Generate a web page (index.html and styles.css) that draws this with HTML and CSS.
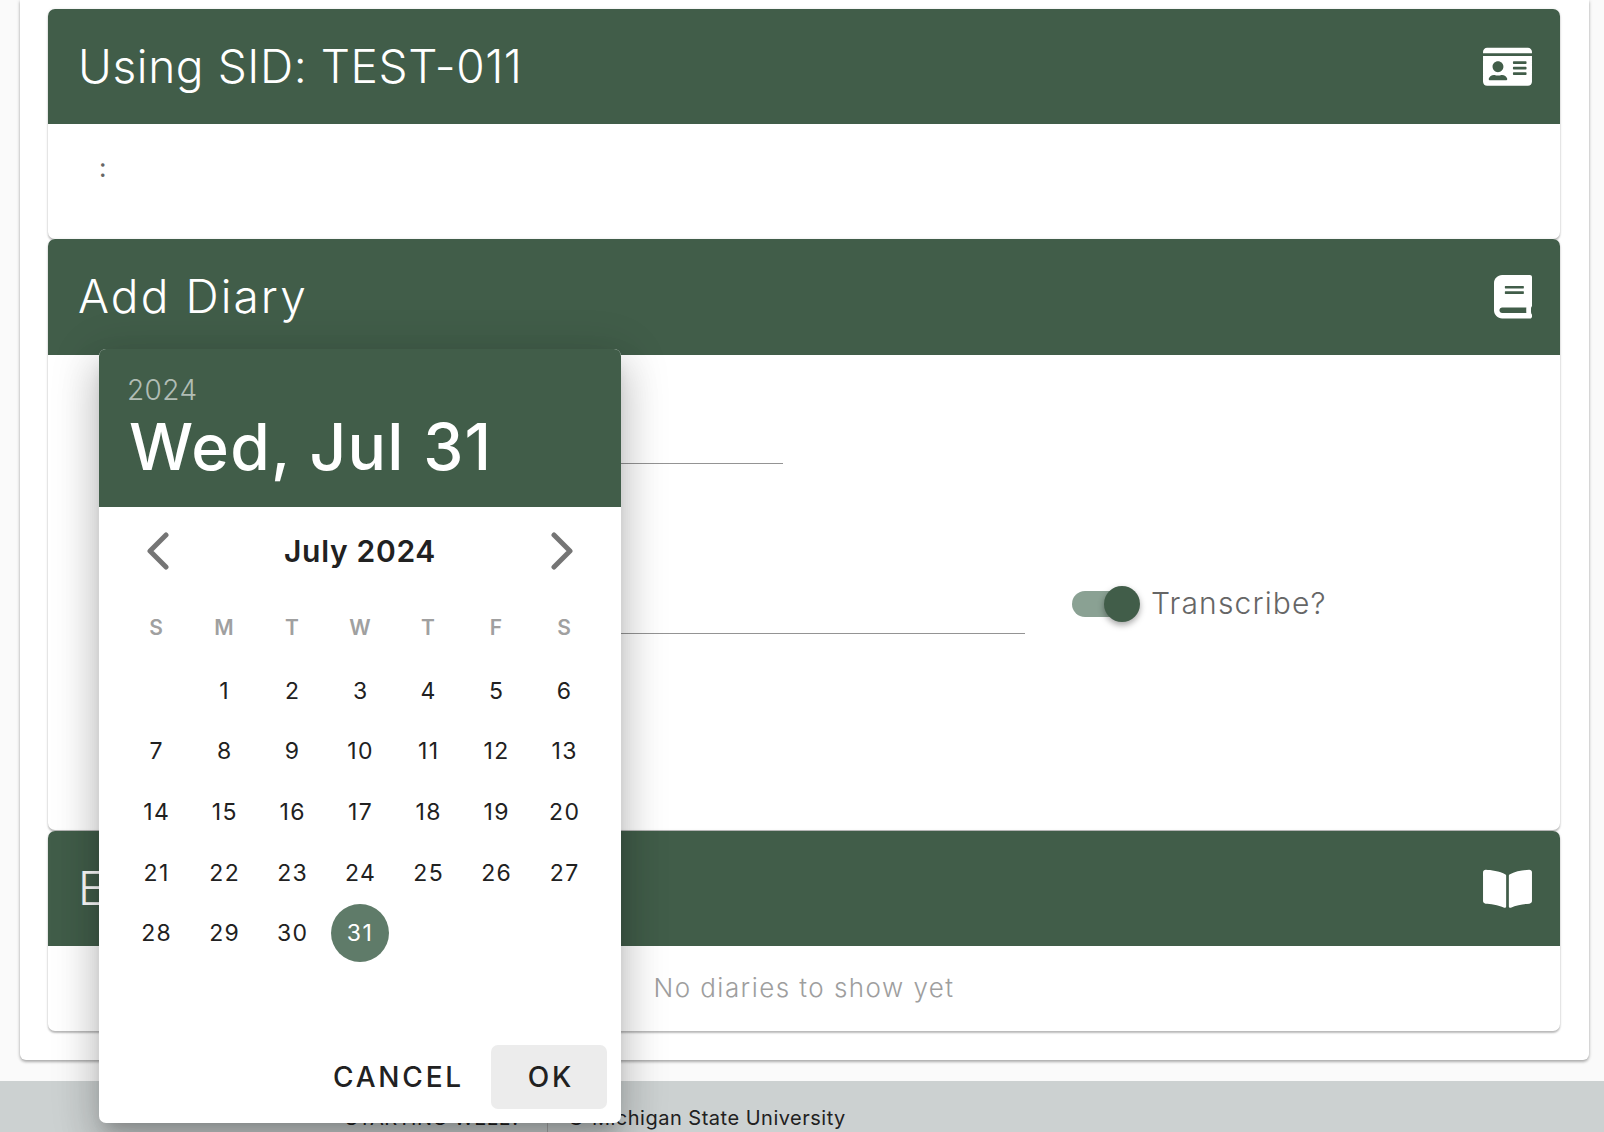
FILE: index.html
```html
<!DOCTYPE html>
<html>
<head>
    <title>Diary</title>
    <link rel="stylesheet" href="styles.css">
</head>
<body>
    <div class="sheet">
        <!-- subject card -->
        <section class="card card-sid">
            <header class="card-head">
                <h2>Using SID: TEST-011</h2>
                <svg class="icon-wide" viewBox="0 0 576 512"><path d="M528 32H48C21.5 32 0 53.5 0 80v16h576V80c0-26.5-21.5-48-48-48zM0 432c0 26.5 21.5 48 48 48h480c26.5 0 48-21.5 48-48V128H0v304zm352-232c0-4.4 3.6-8 8-8h144c4.4 0 8 3.6 8 8v16c0 4.4-3.6 8-8 8H360c-4.4 0-8-3.6-8-8v-16zm0 64c0-4.4 3.6-8 8-8h144c4.4 0 8 3.6 8 8v16c0 4.4-3.6 8-8 8H360c-4.4 0-8-3.6-8-8v-16zm0 64c0-4.4 3.6-8 8-8h144c4.4 0 8 3.6 8 8v16c0 4.4-3.6 8-8 8H360c-4.4 0-8-3.6-8-8v-16zM176 192c35.3 0 64 28.7 64 64s-28.7 64-64 64-64-28.7-64-64 28.7-64 64-64zM67.1 396.2C75.5 370.5 99.6 352 128 352h8.2c12.3 5.1 25.7 8 39.8 8s27.6-2.9 39.8-8h8.2c28.4 0 52.5 18.5 60.9 44.2 3.2 9.9-5.2 19.8-15.6 19.8H82.7c-10.4 0-18.8-10-15.6-19.8z"/></svg>
            </header>
            <div class="card-body sid-body">:</div>
        </section>

        <!-- add diary form -->
        <section class="card card-add">
            <header class="card-head head-add">
                <h2>Add Diary</h2>
                <svg class="icon-narrow" viewBox="0 0 448 512"><path d="M448 360V24c0-13.3-10.7-24-24-24H96C43 0 0 43 0 96v320c0 53 43 96 96 96h328c13.3 0 24-10.7 24-24v-16c0-7.5-3.5-14.3-8.9-18.7-4.2-15.4-4.2-59.3 0-74.7 5.4-4.3 8.9-11.1 8.9-18.6zM128 134c0-3.3 2.7-6 6-6h212c3.3 0 6 2.7 6 6v20c0 3.3-2.7 6-6 6H134c-3.3 0-6-2.7-6-6v-20zm0 64c0-3.3 2.7-6 6-6h212c3.3 0 6 2.7 6 6v20c0 3.3-2.7 6-6 6H134c-3.3 0-6-2.7-6-6v-20zm253.4 250H96c-17.7 0-32-14.3-32-32 0-17.6 14.4-32 32-32h285.4c-1.9 17.1-1.9 46.9 0 64z"/></svg>
            </header>
            <div class="card-body add-body">
                <div class="field field-date"></div>
                <div class="add-row">
                    <div class="field field-note"></div>
                    <div class="switch">
                        <span class="switch-track"><span class="switch-thumb"></span></span>
                        <span class="switch-label">Transcribe?</span>
                    </div>
                </div>
            </div>
        </section>

        <!-- diary list, the dialog covers all of the title but its first letter -->
        <section class="card card-list">
            <header class="card-head">
                <h2>E</h2>
                <svg class="icon-wide" viewBox="0 0 576 512"><path d="M542.22 32.05c-54.8 3.11-163.72 14.43-230.96 55.59-4.64 2.84-7.27 7.89-7.27 13.17v363.87c0 11.55 12.63 18.85 23.28 13.49 69.18-34.82 169.23-44.32 218.7-46.92 16.89-.89 30.02-14.43 30.02-30.66V62.75c.01-17.71-15.35-31.74-33.77-30.7zM264.73 87.64C197.5 46.48 88.58 35.17 33.78 32.05 15.36 31.01 0 45.04 0 62.75V400.6c0 16.24 13.13 29.78 30.02 30.67 49.49 2.6 149.59 12.11 218.77 46.95 10.62 5.35 23.21-1.94 23.21-13.46V100.63c0-5.29-2.62-10.14-7.27-12.99z"/></svg>
            </header>
            <div class="card-body list-body">No diaries to show yet</div>
        </section>
    </div>

    <footer class="footer">
        <span class="footer-app">STARTING WELL?</span>
        <span class="footer-sep"></span>
        <span class="footer-org">© Michigan State University</span>
    </footer>

    <!-- date picker dialog, sits over the form -->
    <div class="picker">
        <div class="picker-head">
            <div class="picker-year">2024</div>
            <div class="picker-date">Wed, Jul 31</div>
        </div>
        <div class="picker-month">
            <svg class="chev" viewBox="0 0 24 38"><path d="M20 3 L4 19 L20 35"/></svg>
            <strong>July 2024</strong>
            <svg class="chev" viewBox="0 0 24 38"><path d="M4 3 L20 19 L4 35"/></svg>
        </div>
        <div class="picker-grid">
            <span class="dow">S</span><span class="dow">M</span><span class="dow">T</span><span class="dow">W</span><span class="dow">T</span><span class="dow">F</span><span class="dow">S</span>
            <span></span><span>1</span><span>2</span><span>3</span><span>4</span><span>5</span><span>6</span>
            <span>7</span><span>8</span><span>9</span><span>10</span><span>11</span><span>12</span><span>13</span>
            <span>14</span><span>15</span><span>16</span><span>17</span><span>18</span><span>19</span><span>20</span>
            <span>21</span><span>22</span><span>23</span><span>24</span><span>25</span><span>26</span><span>27</span>
            <span>28</span><span>29</span><span>30</span><span class="picked"><b>31</b></span>
        </div>
        <div class="picker-actions">
            <a class="btn">CANCEL</a>
            <a class="btn btn-ok">OK</a>
        </div>
    </div>
</body>
</html>
```

FILE: styles.css
```css
/* Page */
html, body {
    height: 100%;
}

body {
    margin: 0;
    overflow: hidden;
    background: #fafafa;
    font-family: Inter, "Liberation Sans", sans-serif;
    color: #212121;
    position: relative;
}

h2 {
    margin: 0 0 2px;
    font-size: 46px;
    font-weight: 350;
    letter-spacing: 0.6px;
}

/* Outer sheet */
.sheet {
    margin: 0 15px 0 20px;
    padding: 9px 29px 29px 28px;
    height: 1060px;
    box-sizing: border-box;
    background: #fff;
    border-radius: 0 0 6px 6px;
    box-shadow: 0 2px 3px rgba(0,0,0,0.28), 0 0 4px rgba(0,0,0,0.12);
}

/* Cards */
.card {
    background: #fff;
    border-radius: 7px;
    box-shadow: 0 2px 2px rgba(0,0,0,0.25), 0 0 3px rgba(0,0,0,0.1);
}

.card-sid { height: 230px; }
.card-add { height: 591px; margin-bottom: 1px; }
.card-list { height: 200px; }

.card-head {
    height: 115px;
    padding: 0 28px 0 30px;
    box-sizing: border-box;
    display: flex;
    align-items: center;
    justify-content: space-between;
    background: #415d49;
    color: #fff;
    border-radius: 7px 7px 0 0;
}

.head-add {
    height: 116px;
}

.head-add h2 {
    letter-spacing: 2.1px;
}

.icon-wide, .icon-narrow {
    height: 43.5px;
    fill: #fff;
}

.icon-wide { width: 49px; }
.icon-narrow { width: 38px; }

.sid-body {
    padding: 28px 0 0 51px;
    font-size: 26px;
    color: #666;
}

.list-body {
    padding-top: 26px;
    text-align: center;
    font-size: 26px;
    font-weight: 300;
    letter-spacing: 1.45px;
    color: #9e9e9e;
}

/* Form */
.add-body {
    padding: 108px 0 0 52px;
}

.field {
    border-bottom: 1px solid #949494;
    box-sizing: border-box;
}

.field-date {
    width: 683px;
}

.add-row {
    margin-top: 115px;
    height: 55px;
    display: flex;
    align-items: flex-start;
}

.field-note {
    width: 925px;
    height: 55px;
}

.switch {
    margin: 7px 0 0 47px;
    display: flex;
    align-items: center;
    gap: 11px;
    height: 36px;
}

.switch-track {
    display: block;
    position: relative;
    width: 52px;
    height: 26px;
    border-radius: 13px;
    background: #8aa193;
    margin-right: 16px;
}

.switch-thumb {
    position: absolute;
    top: -5px;
    left: 32px;
    width: 36px;
    height: 36px;
    border-radius: 50%;
    background: #415d49;
    box-shadow: 0 3px 6px rgba(0,0,0,0.35);
}

.switch-label {
    margin-bottom: 2px;
    font-size: 30px;
    font-weight: 300;
    letter-spacing: 1.15px;
    color: #666;
}

/* Footer */
.footer {
    margin-top: 21px;
    height: 51px;
    padding: 25px 0 0 345px;
    box-sizing: border-box;
    display: flex;
    align-items: flex-start;
    background: #ccd1d1;
    font-size: 20px;
    line-height: 24px;
    letter-spacing: 0.5px;
    color: #212121;
}

.footer-app {
    width: 202px;
    flex: none;
}

.footer-sep {
    width: 1px;
    height: 30px;
    background: #aaa;
    margin-right: 19px;
}

/* Date picker dialog */
.picker {
    position: absolute;
    left: 99px;
    top: 349px;
    width: 522px;
    height: 774px;
    background: #fff;
    border-radius: 7px;
    overflow: hidden;
    box-shadow: 0 11px 15px -7px rgba(0,0,0,0.2), 0 24px 38px 3px rgba(0,0,0,0.14), 0 9px 46px 8px rgba(0,0,0,0.12);
}

.picker-head {
    height: 158px;
    padding: 25px 29px 0 30px;
    box-sizing: border-box;
    background: #415d49;
    color: #fff;
}

.picker-year {
    margin-left: -2px;
    font-size: 28px;
    font-weight: 300;
    line-height: 32px;
    letter-spacing: 0.4px;
    color: rgba(255,255,255,0.6);
}

.picker-date {
    margin-top: 4px;
    font-size: 64px;
    font-weight: 500;
    line-height: 74px;
    letter-spacing: 1.3px;
}

.picker-month {
    height: 88px;
    margin-bottom: 1px;
    padding: 0 47px;
    display: flex;
    align-items: center;
    justify-content: space-between;
    font-size: 30px;
    letter-spacing: 0.7px;
}

.picker-month strong {
    font-weight: 600;
}

.chev {
    width: 24px;
    height: 38px;
    fill: none;
    stroke: #757575;
    stroke-width: 5;
    stroke-linecap: round;
    stroke-linejoin: round;
}

.picker-grid {
    margin: 0 23px;
    display: grid;
    grid-template-columns: repeat(7, 68px);
    grid-template-rows: 64.5px;
    grid-auto-rows: 60.6px;
    font-size: 23px;
    letter-spacing: 1.4px;
}

.picker-grid span {
    padding-left: 1.4px;
    display: flex;
    align-items: center;
    justify-content: center;
}

.picker-grid .dow {
    height: 62px;
    padding-left: 0;
    align-self: start;
    font-size: 21px;
    font-weight: 600;
    letter-spacing: 0;
    color: #a0a0a0;
}

.picker-grid .picked {
    padding-left: 0;
}

.picked b {
    width: 58px;
    height: 58px;
    border-radius: 50%;
    display: flex;
    align-items: center;
    justify-content: center;
    font-weight: 400;
    background: #5f7b69;
    color: #fff;
}

.picker-actions {
    position: absolute;
    right: 14px;
    bottom: 14px;
    display: flex;
    align-items: center;
    gap: 3px;
    font-size: 28px;
    font-weight: 500;
    letter-spacing: 2.8px;
}

.btn {
    height: 64px;
    padding: 0 24px;
    display: flex;
    align-items: center;
    border-radius: 7px;
}

.btn-ok {
    width: 116px;
    padding-left: 28px;
    box-sizing: border-box;
    justify-content: center;
    background: #ececec;
}
```
